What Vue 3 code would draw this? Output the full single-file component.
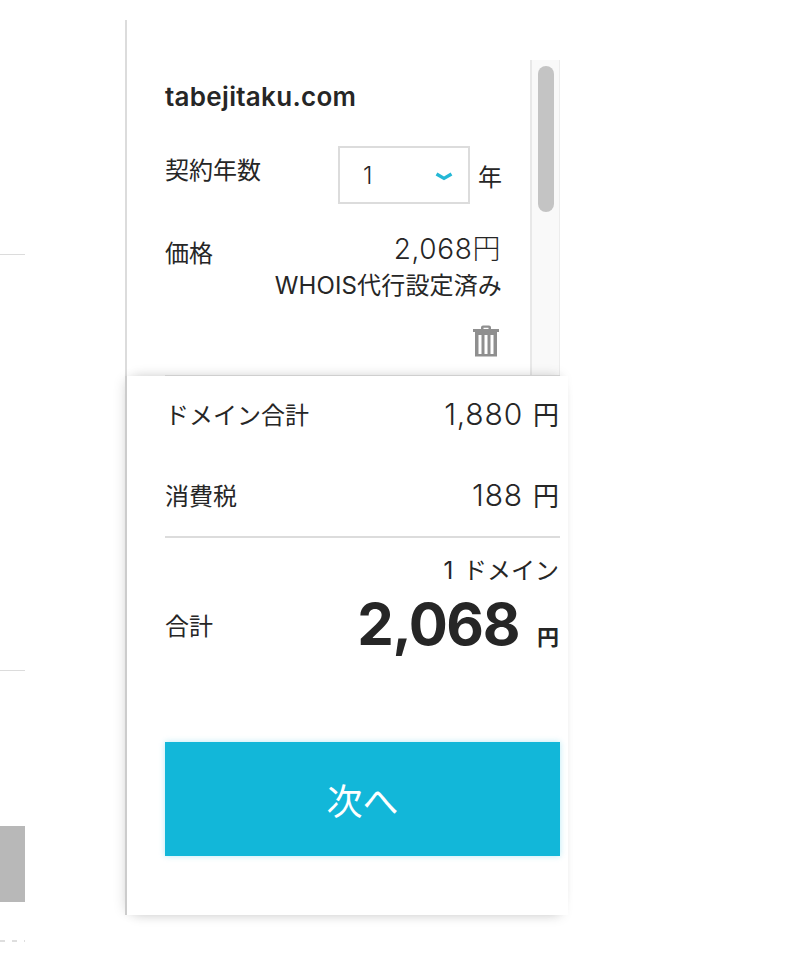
<script setup>
const rows = [
  { label: 'ドメイン合計', value: '1,880', unit: '円' },
  { label: '消費税', value: '188', unit: '円' },
]
</script>

<template>
  <div class="page">
    <div class="stub">
      <div class="stub-line first"></div>
      <div class="stub-line second"></div>
      <div class="stub-block"></div>
      <div class="stub-dash"></div>
    </div>
    <div class="panel">
      <div class="top">
        <div class="items">
          <h2 class="domain">tabejitaku.com</h2>
          <div class="term">
            <span class="term-label">契約年数</span>
            <div class="term-control">
              <div class="select">
                <span>1</span>
                <svg class="chevron" width="18" height="10" viewBox="0 0 18 10" aria-hidden="true">
                  <path d="M1.500 2 9 6.400 16.500 2" fill="none" stroke="#24b8d6" stroke-width="3.400" />
                </svg>
              </div>
              <span class="unit">年</span>
            </div>
          </div>
          <div class="price">
            <span class="price-label">価格</span>
            <div class="price-values">
              <div class="price-num">2,068円</div>
              <div class="price-note">WHOIS代行設定済み</div>
            </div>
          </div>
          <div class="trash-row">
            <svg width="26" height="32" viewBox="0 0 26 32" aria-hidden="true">
              <path fill="#8f8f8f" fill-rule="evenodd" d="M8 4V2.5C8 1.2 9 .5 10 .5h6c1 0 2 .7 2 2V4h8v3H0V4h8Zm2.500 0h5V2.800h-5V4ZM2 7H24V31.500H2V7Zm3.500 3V29h3V10H5.500Zm6 0V29h3V10h-3Zm6 0V29h3V10h-3Z" />
            </svg>
          </div>
        </div>
        <div class="track"><div class="thumb"></div></div>
      </div>
      <div class="summary">
        <div v-for="row in rows" :key="row.label" class="row">
          <span>{{ row.label }}</span>
          <span class="row-value">{{ row.value }}<i>{{ row.unit }}</i></span>
        </div>
        <div class="total">
          <div class="count">1 ドメイン</div>
          <div class="total-line">
            <span class="total-label">合計</span>
            <span class="total-value"><b>2,068</b><em>円</em></span>
          </div>
        </div>
        <button class="next" type="button">次へ</button>
      </div>
    </div>
  </div>
</template>

<style>
html, body { margin: 0; background: #fff; }
</style>

<style scoped>
.page {
  display: flex;
  width: 796px;
  height: 962px;
  overflow: hidden;
  background: #fff;
  color: #262626;
  font-family: Inter, "Noto Sans CJK JP", sans-serif;
}
.stub {
  flex: 0 0 25px;
  display: flex;
  flex-direction: column;
}
.stub-line { height: 1px; background: #dcdcdc; }
.stub-line.first { margin-top: 254px; }
.stub-line.second { margin-top: 415px; }
.stub-block { height: 76px; margin-top: 155px; background: #b8b8b8; }
.stub-dash {
  height: 2px;
  margin-top: 38px;
  background: repeating-linear-gradient(90deg, #dedede 0 5px, transparent 5px 12px);
}
.panel {
  flex: 0 0 444px;
  margin: 20px 0 47px 100px;
  display: flex;
  flex-direction: column;
  border-left: 2px solid #dcdcdc;
  box-sizing: border-box;
}
.top {
  flex: 0 0 356px;
  width: 433px;
  display: flex;
  justify-content: space-between;
  box-sizing: border-box;
}
.items {
  flex: 1;
  padding: 60px 28px 0 38px;
  box-sizing: border-box;
}
.domain {
  margin: 0;
  font-size: 26px;
  line-height: 34px;
  font-weight: 600;
  letter-spacing: 0.3px;
}
.term {
  display: flex;
  justify-content: space-between;
  margin-top: 32px;
  font-size: 24px;
}
.term-label { line-height: 36px; margin-top: 7px; }
.term-control { display: flex; align-items: center; gap: 8px; }
.select {
  width: 132px;
  height: 58px;
  padding: 0 15px 0 23px;
  box-sizing: border-box;
  display: flex;
  align-items: center;
  justify-content: space-between;
  border: 2px solid #dcdcdc;
  font-weight: 300;
}
.chevron { margin-top: 3px; }
.unit { margin-top: 1px; }
.price {
  display: flex;
  justify-content: space-between;
  margin-top: 25px;
}
.price-label { font-size: 24px; line-height: 36px; margin-top: 7px; }
.price-values { text-align: right; }
.price-num { font-size: 28px; line-height: 40px; letter-spacing: 0.6px; font-weight: 300; margin-right: 1px; }
.price-note { font-size: 24px; line-height: 34px; letter-spacing: 0.15px; }
.trash-row { display: flex; justify-content: flex-end; margin-top: 22px; padding-right: 3px; }
.track {
  flex: 0 0 30px;
  margin-top: 40px;
  background: #f9f9f9;
  border-left: 2px solid #e8e8e8;
  border-right: 1px solid #ececec;
  box-sizing: border-box;
  padding: 6px 5px 0 6px;
}
.thumb { height: 146px; border-radius: 8px; background: #c4c4c4; }
.summary {
  flex: 1;
  width: 441px;
  padding: 13px 8px 0 38px;
  box-sizing: border-box;
  background: #fff;
  position: relative;
  box-shadow:
    -2px 0 0 #cccccc,
    -6px 0 12px -4px rgba(0, 0, 0, 0.14),
    0 -7px 12px -7px rgba(0, 0, 0, 0.14),
    0 7px 12px -7px rgba(0, 0, 0, 0.16);
}
.summary::before {
  content: "";
  position: absolute;
  top: -1px;
  left: 38px;
  width: 395px;
  height: 1px;
  background: #cfcfcf;
}
.row {
  display: flex;
  justify-content: space-between;
  align-items: center;
  height: 48px;
  margin-bottom: 33px;
  padding-right: 1px;
  font-size: 24px;
}
.row-value { font-size: 30px; letter-spacing: 0.8px; font-weight: 300; }
.row-value i { font-style: normal; font-size: 26px; font-weight: 400; margin-left: 10px; letter-spacing: 0; }
.row + .row { margin-bottom: 0; }
.total {
  margin-top: 18px;
  border-top: 2px solid #dcdcdc;
  padding-top: 16px;
}
.count {
  text-align: right;
  font-size: 24px;
  line-height: 34px;
  padding-right: 1px;
  word-spacing: 3px;
}
.total-line {
  display: flex;
  justify-content: space-between;
  align-items: center;
  height: 72px;
  padding-right: 1px;
}
.total-label { font-size: 24px; }
.total-value b { font-size: 58px; font-weight: 700; letter-spacing: -1.4px; }
.total-value em { font-style: normal; font-size: 22px; font-weight: 700; margin-left: 18px; }
.next {
  display: block;
  width: 395px;
  height: 114px;
  margin-top: 82px;
  border: 0;
  background: #12b7d9;
  color: #fff;
  font: 400 36px Inter, "Noto Sans CJK JP", sans-serif;
  box-shadow: 0 0 6px rgba(18, 183, 217, 0.3);
}
</style>
